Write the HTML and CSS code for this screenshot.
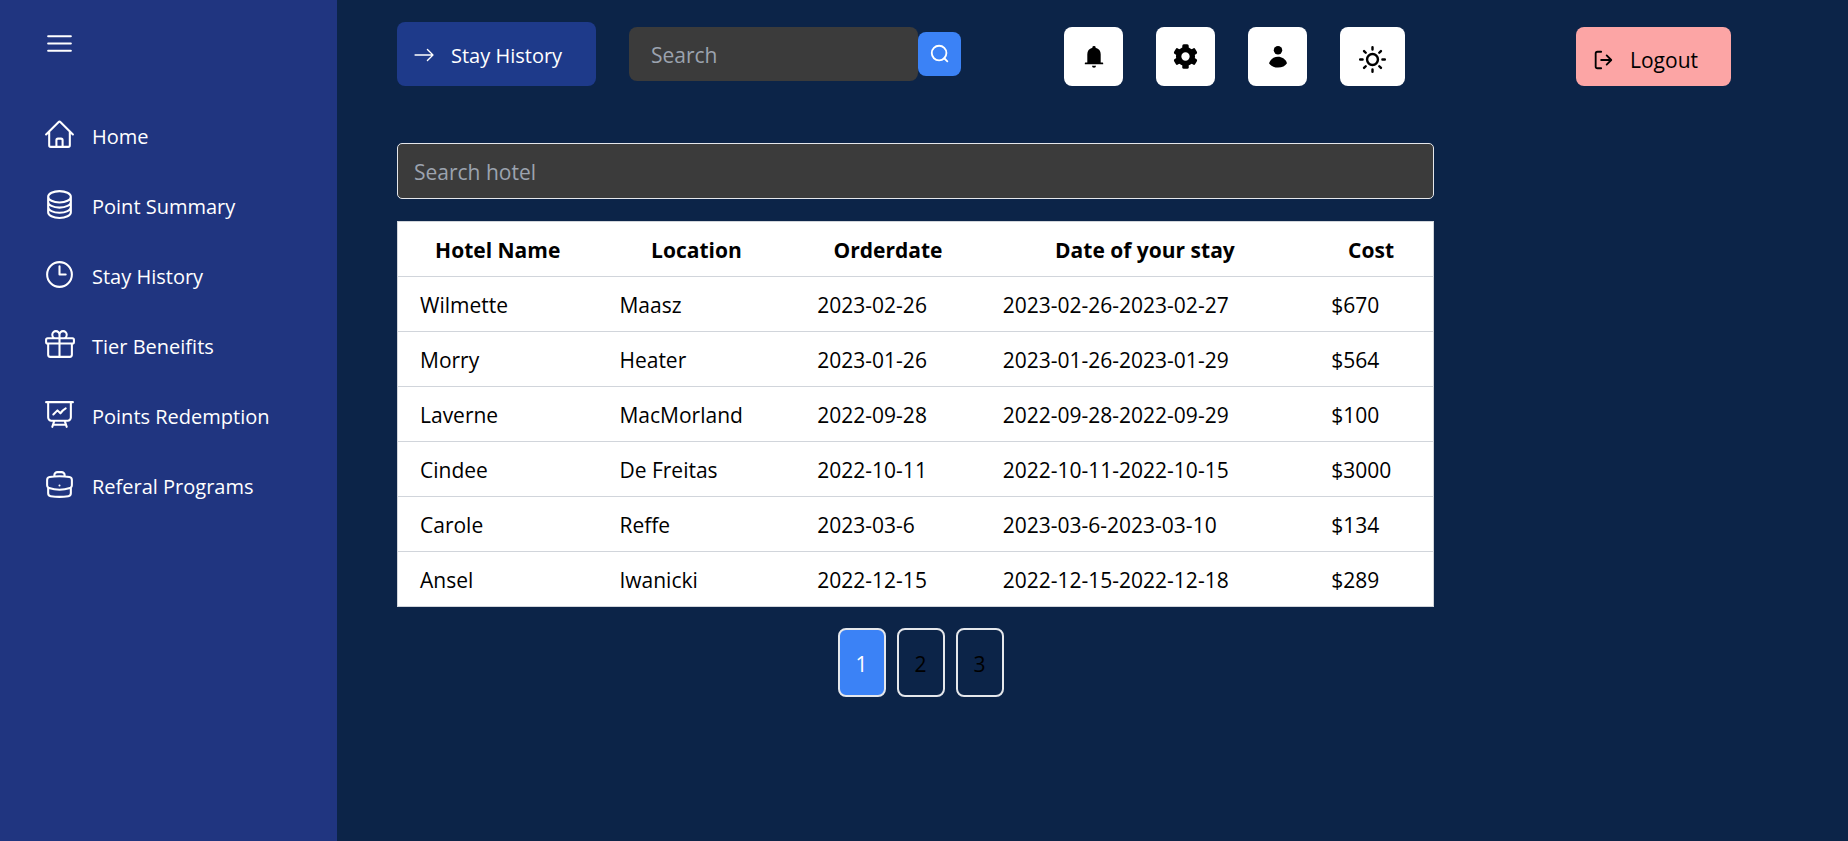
FILE: index.html
```html
<!DOCTYPE html>
<html lang="en">
<head>
<meta charset="utf-8">
<title>Stay History</title>
<link rel="stylesheet" href="styles.css">
</head>
<body>
<div class="app">
  <aside class="sidebar">
    <button class="menu-toggle" type="button" aria-label="Toggle menu">
      <svg class="icon-lg outline" viewBox="0 0 24 24"><path d="M3.75 6.75h16.5M3.75 12h16.5m-16.5 5.25h16.5"/></svg>
    </button>
    <nav class="nav">
      <a class="nav-link" href="#"><svg class="icon-lg outline" viewBox="0 0 24 24"><path d="M2.25 12l8.954-8.955c.44-.439 1.152-.439 1.591 0L21.75 12M4.5 9.75v10.125c0 .621.504 1.125 1.125 1.125H9.75v-4.875c0-.621.504-1.125 1.125-1.125h2.25c.621 0 1.125.504 1.125 1.125V21h4.125c.621 0 1.125-.504 1.125-1.125V9.75M8.25 21h8.25"/></svg><span>Home</span></a>
      <a class="nav-link" href="#"><svg class="icon-lg outline" viewBox="0 0 24 24"><path d="M20.25 6.375c0 2.278-3.694 4.125-8.25 4.125S3.75 8.653 3.75 6.375m16.5 0c0-2.278-3.694-4.125-8.25-4.125S3.75 4.097 3.75 6.375m16.5 0v11.25c0 2.278-3.694 4.125-8.25 4.125s-8.25-1.847-8.25-4.125V6.375m16.5 0v3.75m-16.5-3.75v3.75m16.5 0v3.75C20.25 16.153 16.556 18 12 18s-8.25-1.847-8.25-4.125v-3.75m16.5 0c0 2.278-3.694 4.125-8.25 4.125s-8.25-1.847-8.25-4.125"/></svg><span>Point Summary</span></a>
      <a class="nav-link" href="#"><svg class="icon-lg outline" viewBox="0 0 24 24"><path d="M12 6v6h4.5m4.5 0a9 9 0 11-18 0 9 9 0 0118 0z"/></svg><span>Stay History</span></a>
      <a class="nav-link" href="#"><svg class="icon-lg outline" viewBox="0 0 24 24"><path d="M21 11.25v8.25a1.5 1.5 0 01-1.5 1.5H5.25a1.5 1.5 0 01-1.5-1.5v-8.25M12 4.875A2.625 2.625 0 109.375 7.5H12m0-2.625V7.5m0-2.625A2.625 2.625 0 1114.625 7.5H12m0 0V21m-8.625-9.75h18c.621 0 1.125-.504 1.125-1.125v-1.5c0-.621-.504-1.125-1.125-1.125h-18c-.621 0-1.125.504-1.125 1.125v1.5c0 .621.504 1.125 1.125 1.125z"/></svg><span>Tier Beneifits</span></a>
      <a class="nav-link" href="#"><svg class="icon-lg outline" viewBox="0 0 24 24"><path d="M3.75 3v11.25A2.25 2.25 0 006 16.5h2.25M3.75 3h-1.5m1.5 0h16.5m0 0h1.5m-1.5 0v11.25A2.25 2.25 0 0118 16.5h-2.25m-7.5 0h7.5m-7.5 0l-1 3m8.5-3l1 3m0 0l.5 1.5m-.5-1.5h-9.5m0 0l-.5 1.5m.75-9l3-3 2.148 2.148A12.061 12.061 0 0116.5 7.605"/></svg><span>Points Redemption</span></a>
      <a class="nav-link" href="#"><svg class="icon-lg outline" viewBox="0 0 24 24"><path d="M20.25 14.15v4.25c0 1.094-.787 2.036-1.872 2.18-2.087.277-4.216.42-6.378.42s-4.291-.143-6.378-.42c-1.085-.144-1.872-1.086-1.872-2.18v-4.25m16.5 0a2.18 2.18 0 00.75-1.661V8.706c0-1.081-.768-2.015-1.837-2.175a48.114 48.114 0 00-3.413-.387m4.5 8.006c-.194.165-.42.295-.673.38A23.978 23.978 0 0112 15.75c-2.648 0-5.195-.429-7.577-1.22a2.016 2.016 0 01-.673-.38m0 0A2.18 2.18 0 013 12.489V8.706c0-1.081.768-2.015 1.837-2.175a48.111 48.111 0 013.413-.387m7.5 0V5.25A2.25 2.25 0 0013.5 3h-3a2.25 2.25 0 00-2.25 2.25v.894m7.5 0a48.667 48.667 0 00-7.5 0M12 12.75h.008v.008H12v-.008z"/></svg><span>Referal Programs</span></a>
    </nav>
  </aside>
  <main class="main">
    <header class="topbar">
      <button class="crumb" type="button">
        <svg class="icon-md" viewBox="0 0 16 16"><path d="M1 8a.5.5 0 0 1 .5-.5h11.793l-3.147-3.146a.5.5 0 0 1 .708-.708l4 4a.5.5 0 0 1 0 .708l-4 4a.5.5 0 0 1-.708-.708L13.293 8.5H1.5A.5.5 0 0 1 1 8z"/></svg>
        <span>Stay History</span>
      </button>
      <form class="search" role="search">
        <input class="search-input" type="search" placeholder="Search" aria-label="Search">
        <button class="search-button" type="button" aria-label="Search"><svg class="icon-md outline bold" viewBox="0 0 24 24"><circle cx="11" cy="11" r="8"/><path d="M20 20l-3.350-3.350"/></svg></button>
      </form>
      <div class="actions">
        <button class="action" type="button" aria-label="Notifications"><svg class="icon-md" viewBox="0 0 24 24"><path d="M12 0a1.700 1.700 0 0 1 1.700 2A7.500 7.500 0 0 1 19.300 9.500V18H21.500a.5.5 0 0 1 .5.500V20H2v-1.500a.5.5 0 0 1 .5-.5H4.700V9.500A7.500 7.500 0 0 1 10.300 2 1.700 1.700 0 0 1 12 0zM9.800 21.500h4.400a2.200 2.200 0 0 1-4.400 0z"/></svg></button>
        <button class="action" type="button" aria-label="Settings"><svg class="icon-gear" viewBox="0 0 24 24"><circle cx="12" cy="12" r="6.600" fill="none" stroke="currentColor" stroke-width="5.200"/><rect x="8.900" y=".3" width="6.200" height="5.500" rx="1.500"/><rect x="8.900" y=".3" width="6.200" height="5.500" rx="1.500" transform="rotate(60 12 12)"/><rect x="8.900" y=".3" width="6.200" height="5.500" rx="1.500" transform="rotate(120 12 12)"/><rect x="8.900" y=".3" width="6.200" height="5.500" rx="1.500" transform="rotate(180 12 12)"/><rect x="8.900" y=".3" width="6.200" height="5.500" rx="1.500" transform="rotate(240 12 12)"/><rect x="8.900" y=".3" width="6.200" height="5.500" rx="1.500" transform="rotate(300 12 12)"/></svg></button>
        <button class="action" type="button" aria-label="Profile"><svg class="icon-md" viewBox="0 0 24 24"><circle cx="12" cy="4.600" r="4.600"/><path d="M2.200 18.700C4 14.100 7.800 11.800 12 11.800S20 14.100 21.800 18.700C20 21.500 16.500 23.500 12 23.500S4 21.500 2.200 18.700z"/></svg></button>
        <button class="action action-theme" type="button" aria-label="Light mode"><svg class="icon-sun" viewBox="0 0 24 24"><circle cx="12" cy="12" r="4.500"/><path d="M12 1.800v2M12 20.200v2M1.800 12h2M20.200 12h2M5 5l1.400 1.400M17.600 17.600l1.400 1.400M5 19l1.400-1.400M17.600 6.400L19 5"/></svg></button>
      </div>
      <button class="logout" type="button">
        <svg class="icon-md outline bold" viewBox="0 0 24 24"><path d="M10 3H6a2 2 0 0 0-2 2v14a2 2 0 0 0 2 2h4M16 17l5-5-5-5M20 12H10"/></svg>
        <span>Logout</span>
      </button>
    </header>
    <section class="content">
      <input class="filter" type="text" placeholder="Search hotel" aria-label="Search hotel">
      <table class="stays">
        <colgroup><col class="col-name"><col class="col-location"><col class="col-order"><col class="col-stay"><col class="col-cost"></colgroup>
        <thead><tr><th>Hotel Name</th><th>Location</th><th>Orderdate</th><th>Date of your stay</th><th>Cost</th></tr></thead>
        <tbody>
          <tr><td>Wilmette</td><td>Maasz</td><td>2023-02-26</td><td>2023-02-26-2023-02-27</td><td>$670</td></tr>
          <tr><td>Morry</td><td>Heater</td><td>2023-01-26</td><td>2023-01-26-2023-01-29</td><td>$564</td></tr>
          <tr><td>Laverne</td><td>MacMorland</td><td>2022-09-28</td><td>2022-09-28-2022-09-29</td><td>$100</td></tr>
          <tr><td>Cindee</td><td>De Freitas</td><td>2022-10-11</td><td>2022-10-11-2022-10-15</td><td>$3000</td></tr>
          <tr><td>Carole</td><td>Reffe</td><td>2023-03-6</td><td>2023-03-6-2023-03-10</td><td>$134</td></tr>
          <tr><td>Ansel</td><td>Iwanicki</td><td>2022-12-15</td><td>2022-12-15-2022-12-18</td><td>$289</td></tr>
        </tbody>
      </table>
      <nav class="pages" aria-label="Pages">
        <button class="page current" type="button">1</button>
        <button class="page" type="button">2</button>
        <button class="page" type="button">3</button>
      </nav>
    </section>
  </main>
</div>
</body>
</html>
```
FILE: styles.css
```css
* { box-sizing: border-box; }

body {
  margin: 0;
  background: #0c2448;
  color: #000;
  font: 21px/33px "Open Sans", "Segoe UI", sans-serif;
}

button, input {
  margin: 0;
  border: 0;
  font: inherit;
  color: inherit;
}

button { cursor: pointer; }

svg { display: block; flex: none; fill: currentColor; }
.icon-lg { width: 33px; height: 33px; }
.icon-md { width: 22px; height: 22px; }
.icon-gear { width: 25px; height: 25px; }
.icon-sun {
  width: 29px;
  height: 29px;
  fill: none;
  stroke: currentColor;
  stroke-width: 2;
  stroke-linecap: round;
}
.outline {
  fill: none;
  stroke: currentColor;
  stroke-width: 1.5;
  stroke-linecap: round;
  stroke-linejoin: round;
}
.outline.bold { stroke-width: 2; }

.app { display: flex; min-height: 100vh; }

.sidebar {
  flex: none;
  width: 337px;
  padding: 27px 43px;
  background: #203580;
  color: #fff;
  font-size: 20px;
}

.menu-toggle { display: block; padding: 0; background: none; }

.nav {
  display: flex;
  flex-direction: column;
  gap: 35px;
  margin-top: 58px;
}

.nav-link {
  display: flex;
  gap: 16px;
  color: inherit;
  text-decoration: none;
}

.nav-link span { padding-top: 2px; }

.main { flex: 1; min-width: 0; padding: 22px 117px 22px 60px; }

.topbar { display: flex; align-items: flex-start; height: 64px; }

.crumb {
  display: flex;
  align-items: center;
  gap: 16px;
  width: 199px;
  height: 64px;
  padding: 2px 16px 0;
  border-radius: 8px;
  background: #1e3a8a;
  color: #fff;
  font-size: 20px;
}

.search {
  display: flex;
  align-items: center;
  margin: 5px 0 0 33px;
}

.search-input {
  width: 289px;
  height: 54px;
  padding: 2px 22px 0;
  border-radius: 8px;
  background: #3b3b3b;
}

.search-input::placeholder, .filter::placeholder { color: #9ca3af; opacity: 1; }

.search-button {
  display: grid;
  place-items: center;
  width: 43px;
  height: 44px;
  padding: 0;
  border-radius: 8px;
  background: #3b82f6;
  color: #fff;
}

.actions { display: flex; gap: 33px; margin: 5px 0 0 103px; }

.action {
  display: grid;
  place-items: center;
  width: 59px;
  height: 59px;
  padding: 0;
  border-radius: 8px;
  background: #fff;
}

.action-theme { width: 65px; padding-top: 5px; }

.logout {
  display: flex;
  align-items: center;
  gap: 16px;
  width: 155px;
  height: 59px;
  margin: 5px 0 0 auto;
  padding: 7px 16px 0;
  border-radius: 8px;
  background: #fca5a5;
}

.content { width: calc(100% - 297px); margin-top: 57px; }

.filter {
  display: block;
  width: 100%;
  height: 56px;
  padding: 2px 16px 0;
  border: 1px solid #e5e7eb;
  border-radius: 5px;
  background: #3b3b3b;
}

.stays {
  width: 100%;
  margin-top: 22px;
  border: 1px solid #d1d5db;
  border-collapse: collapse;
  table-layout: fixed;
  background: #fff;
}

.stays th, .stays td { padding: 12px 22px 9px; text-align: left; }
.stays th { text-align: center; font-weight: 700; }
.stays tr { border-bottom: 1px solid #d1d5db; }
.col-name { width: 19.3%; }
.col-location { width: 19.1%; }
.col-order { width: 17.9%; }
.col-stay { width: 31.7%; }
.col-cost { width: 12%; }

.pages {
  display: flex;
  justify-content: center;
  gap: 11px;
  margin-top: 21px;
  padding-left: 10px;
}

.page {
  width: 48px;
  height: 69px;
  padding: 4px 0 0;
  border: 2px solid #e5e7eb;
  border-radius: 8px;
  background: transparent;
}

.page.current { background: #3b82f6; color: #fff; }
```
